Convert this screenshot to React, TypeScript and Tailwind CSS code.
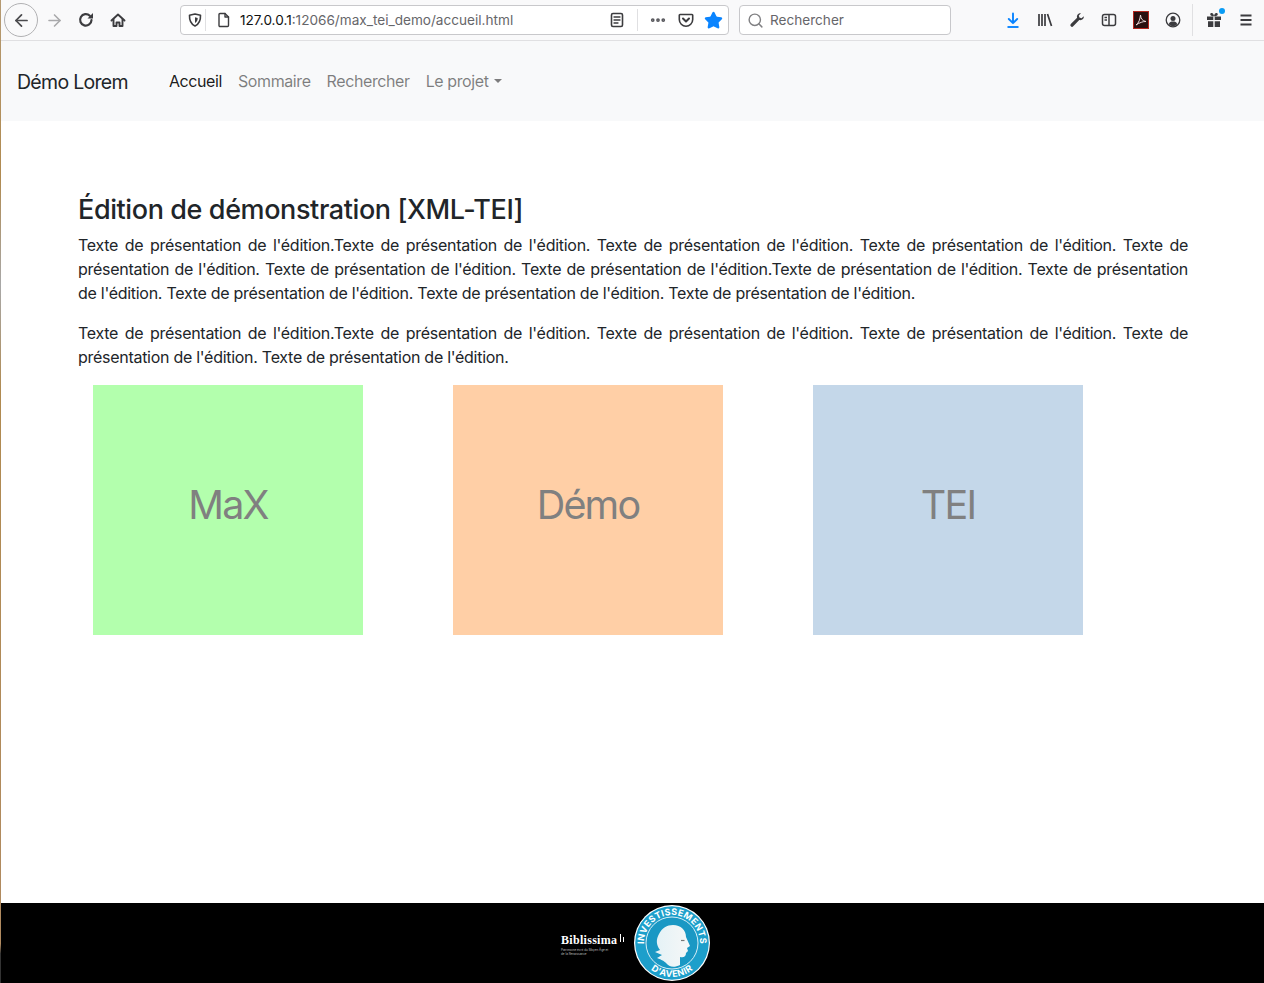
import { ArrowLeft, ArrowRight, Ellipsis, Star, Search } from 'lucide-react'

const para1 =
  "Texte de présentation de l'édition.Texte de présentation de l'édition. Texte de présentation de l'édition. Texte de présentation de l'édition. Texte de présentation de l'édition. Texte de présentation de l'édition. Texte de présentation de l'édition.Texte de présentation de l'édition. Texte de présentation de l'édition. Texte de présentation de l'édition. Texte de présentation de l'édition. Texte de présentation de l'édition."
const para2 =
  "Texte de présentation de l'édition.Texte de présentation de l'édition. Texte de présentation de l'édition. Texte de présentation de l'édition. Texte de présentation de l'édition. Texte de présentation de l'édition."

const cards = [
  { label: 'MaX', bg: 'bg-[#b3ffad]' },
  { label: 'Démo', bg: 'bg-[#ffcfa6]' },
  { label: 'TEI', bg: 'bg-[#c4d7e9]' },
]

const ToolSlot = ({ children }: { children: React.ReactNode }) => (
  <div className="flex h-8 w-8 items-center justify-center">{children}</div>
)

const Glyph = ({ children, size = 16, stroke = false }: { children: React.ReactNode; size?: number; stroke?: boolean }) => (
  <svg
    width={size}
    height={size}
    viewBox="0 0 16 16"
    fill={stroke ? 'none' : 'currentColor'}
    stroke={stroke ? 'currentColor' : 'none'}
    strokeWidth={stroke ? 1.6 : 0}
    strokeLinecap="round"
    strokeLinejoin="round"
  >
    {children}
  </svg>
)

const LogoMark = () => (
  <svg width="76" height="76" viewBox="0 0 76 76" className="shrink-0">
    <defs>
      <linearGradient id="face" x1="0" y1="0" x2="1" y2="0">
        <stop offset="0" stopColor="#e4f2f6" />
        <stop offset="1" stopColor="#f6f7f7" />
      </linearGradient>
      <path id="top-arc" d="M12.600 49.800a28 28 0 1 1 50.800 0" />
      <path id="bottom-arc" d="M8.600 55a34 34 0 0 0 58.800 0" />
    </defs>
    <circle cx="38" cy="38" r="38" fill="#fff" />
    <circle cx="38" cy="38" r="36.800" fill="#1d9fcb" />
    <circle cx="38" cy="38" r="26" fill="#1a98c4" stroke="#d8eef6" />
    <path
      d="M39 20C47 20 52 25 52 32L56 41 53 43 54 46 52 48C52 52 49 53 46 52L46 60C40 63 35 62 32 58 30 56 28 55 23 53L28 50 21 47 26 45C22 40 22 34 25 29 28 23 33 20 39 20Z"
      fill="url(#face)"
    />
    <path d="M47 35.500h3.500" stroke="#777" strokeWidth="1.200" />
    <text fontSize="9" fontWeight="700" fill="#fff" fontFamily="Inter, sans-serif" letterSpacing="0.25">
      <textPath href="#top-arc" startOffset="50%" textAnchor="middle">INVESTISSEMENTS</textPath>
    </text>
    <text fontSize="9" fontWeight="700" fill="#fff" fontFamily="Inter, sans-serif" letterSpacing="0.4">
      <textPath href="#bottom-arc" startOffset="50%" textAnchor="middle">D'AVENIR</textPath>
    </text>
  </svg>
)

const App = () => {
  return (
    <div className="relative flex h-[983px] flex-col overflow-hidden bg-white font-['Inter',sans-serif] text-[#212529]">
      {/* desktop showing at the window edge */}
      <div className="absolute top-0 left-0 h-full w-px bg-[linear-gradient(#b59a72,#b08a50_18%,#a8a8a8_29%,#b08a50_40%,#b08a60_96%,#333_97%)]" />

      {/* Browser toolbar */}
      <div className="flex h-[41px] items-center border-b border-[#e0e0e2] bg-[#f9f9fa] text-[#3c3c3f]">
        <div className="ml-[4px] flex h-[34px] w-[34px] items-center justify-center rounded-full border border-[#b1b1b3]">
          <ArrowLeft size={19} strokeWidth={2.2} className="text-[#4a4a4d]" />
        </div>
        <ToolSlot><ArrowRight size={19} strokeWidth={2} className="text-[#a9a9ab]" /></ToolSlot>
        <ToolSlot>
          <Glyph stroke>
            <path d="M13.500 8A5.700 5.700 0 1 1 11.800 3.800" strokeWidth="2.200" />
            <path d="M15 1v5.500H9.500z" fill="currentColor" stroke="none" />
          </Glyph>
        </ToolSlot>
        <ToolSlot>
          <Glyph stroke>
            <path d="M1.500 8.500 8 2.500l6.500 6" strokeWidth="1.900" />
            <path d="M3.500 7.500V14H6.500V10.500H9.500V14H12.500V7.500" strokeWidth="1.900" />
          </Glyph>
        </ToolSlot>

        <div className="ml-[46px] flex h-[30px] w-[549px] items-center rounded-[4px] border border-[#c8c8cb] bg-white text-[13.600px]">
          <div className="ml-[6px] shrink-0">
            <Glyph stroke>
              <path d="M8 2 13.500 3.300c.2 5-1.300 8.800-5.500 10.700C3.800 12.100 2.300 8.300 2.500 3.300z" />
              <path d="M8 5.200 10.700 5.900c0 2.300-.8 3.900-2.700 5z" fill="currentColor" stroke="none" />
            </Glyph>
          </div>
          <span className="ml-[2px] h-[22px] w-px bg-[#e0e0e2]" />
          <div className="ml-[10px] shrink-0">
            <Glyph stroke>
              <path d="M4 1.500h5l3.500 3.500v8.500a1 1 0 0 1-1 1h-7.500a1 1 0 0 1-1-1v-11a1 1 0 0 1 1-1z" strokeWidth="1.400" />
              <path d="M9 1.500V5h3.500" strokeWidth="1.400" />
            </Glyph>
          </div>
          <span className="mt-px ml-[8px] w-[369px] whitespace-nowrap text-[#111]">
            127.0.0.1<span className="text-[#66666a]">:12066/max_tei_demo/accueil.html</span>
          </span>
          <Glyph stroke>
            <rect x="2.500" y="1.500" width="11" height="13" rx="1.500" />
            <path d="M5 5h6M5 8h6M5 11h4" strokeWidth="1.300" />
          </Glyph>
          <span className="ml-[12px] h-[22px] w-px bg-[#e0e0e2]" />
          <Ellipsis size={18} strokeWidth={3} className="ml-[11px] text-[#55555a]" />
          <div className="ml-[11px] shrink-0">
            <Glyph stroke>
              <path d="M2 2.500h12a.7.7 0 0 1 .7.7V7.500a6.700 6.700 0 0 1-13.400 0V3.200a.7.7 0 0 1 .7-.7z" />
              <path d="M5 6.500 8 9.500l3-3" strokeWidth="2" />
            </Glyph>
          </div>
          <Star size={19} className="ml-[10px] fill-[#0a84ff] text-[#0a84ff]" />
        </div>

        <div className="ml-[10px] flex h-[30px] w-[212px] items-center rounded-[4px] border border-[#c8c8cb] bg-white text-[13.600px] text-[#66666a]">
          <Search size={17} className="ml-[7px] text-[#808083]" />
          <span className="mt-px ml-[6px]">Rechercher</span>
        </div>

        <div className="ml-[46px] flex items-center">
          <ToolSlot>
            <Glyph stroke>
              <g stroke="#0a84ff">
                <path d="M8 1.500V11M3.800 7 8 11.200 12.200 7" strokeWidth="1.900" />
                <path d="M2.500 15h11" strokeWidth="1.900" strokeLinecap="butt" />
              </g>
            </Glyph>
          </ToolSlot>
          <ToolSlot>
            <Glyph stroke>
              <path d="M2 2v12M5 2v12M8 2v12M10.500 2 14.500 14" strokeWidth="1.700" strokeLinecap="butt" />
            </Glyph>
          </ToolSlot>
          <ToolSlot>
            <Glyph>
              <path d="M14.800 4.300c.4 2.300-1.900 4.500-4.500 3.700L4.200 14.300a1.600 1.600 0 0 1-2.400-2.300L8.100 5.800C7.300 3.200 9.700.9 12 1.300L9.800 3.500l.6 2.100 2.100.6z" />
            </Glyph>
          </ToolSlot>
          <ToolSlot>
            <Glyph stroke>
              <rect x="1.500" y="2.500" width="13" height="11" rx="2" strokeWidth="1.500" />
              <path d="M8 3v10M3.500 5.500H6M3.500 8H6" strokeWidth="1.500" strokeLinecap="butt" />
            </Glyph>
          </ToolSlot>
          <ToolSlot>
            <svg width="16" height="18" viewBox="0 0 16 18">
              <rect x=".5" y=".5" width="15" height="17" fill="#2a0f0f" stroke="#b3261e" />
              <path d="M3 14c3-2 4-6 4.500-10 .5 4 2 6 5.500 6.500-3.500 0-6 1-10 3.500z" fill="none" stroke="#e8d8d8" strokeWidth="1" />
            </svg>
          </ToolSlot>
          <ToolSlot>
            <Glyph stroke>
              <circle cx="8" cy="8" r="6.800" strokeWidth="1.300" />
              <circle cx="8" cy="6.400" r="2.500" fill="currentColor" stroke="none" />
              <path d="M3.700 12.200C4.500 10 6 9.600 8 9.600s3.500.4 4.300 2.600C11 13.600 9.500 14 8 14s-3-.4-4.300-1.800z" fill="currentColor" stroke="none" />
            </Glyph>
          </ToolSlot>
        </div>

        <span className="ml-[3px] h-[32px] w-px bg-[#e0e0e2]" />

        <div className="ml-[5px] flex items-center">
          <ToolSlot>
            <div className="relative">
              <Glyph>
                <path d="M1 4.500h6.300V8H1zM8.700 4.500H15V8H8.700zM2 9.200h5.300V15H2zM8.700 9.200H14V15H8.700z" />
                <path d="M8 4.300C6 4.300 4.200 3.700 4.200 2.300 4.200 1.400 5 1 5.700 1 7 1 7.800 2.500 8 4.300zM8 4.300c.2-1.800 1-3.300 2.300-3.300.7 0 1.500.4 1.500 1.300 0 1.400-1.800 2-3.800 2z" />
              </Glyph>
              <span className="absolute -top-[4px] -right-[3px] h-[6px] w-[6px] rounded-full bg-[#0a9cf5]" />
            </div>
          </ToolSlot>
          <ToolSlot>
            <Glyph stroke>
              <path d="M2.500 3.500h11M2.500 8h11M2.500 12.500h11" strokeWidth="1.800" strokeLinecap="butt" />
            </Glyph>
          </ToolSlot>
        </div>
      </div>

      {/* Navbar */}
      <nav className="flex h-[80px] items-center bg-[#f8f9fa] pl-[17px] text-[16px] tracking-[-0.4px]">
        <span className="mt-[4px] mr-[41px] text-[19.500px] leading-none tracking-[-0.7px]">Démo Lorem</span>
        <ul className="flex gap-[16px] text-[#00000080]">
          <li className="text-[#000000e6]">Accueil</li>
          <li>Sommaire</li>
          <li>Rechercher</li>
          <li className="flex items-center gap-[5px]">
            Le projet
            <span className="border-x-[4px] border-t-[4px] border-x-transparent border-t-[#00000080]" />
          </li>
        </ul>
      </nav>

      {/* Content */}
      <main className="flex-1 pt-[71px] pr-[76px] pl-[78px]">
        <h1 className="text-[27px] leading-[36px] font-medium tracking-[-0.4px]">Édition de démonstration [XML-TEI]</h1>
        <div className="text-justify text-[16px] leading-[24px] tracking-[-0.28px]">
          <p className="mt-[5px] mb-[16px]">{para1}</p>
          <p>{para2}</p>
        </div>
        <div className="mt-[16px] flex gap-[90px] pl-[15px]">
          {cards.map((card) => (
            <div
              key={card.label}
              className={`flex h-[250px] w-[270px] items-center justify-center pb-[8px] text-[39.500px] font-[420] tracking-[-1.8px] text-[#808080] ${card.bg}`}
            >
              {card.label}
            </div>
          ))}
        </div>
      </main>

      {/* Footer */}
      <footer className="flex h-[80px] items-center justify-center bg-black pl-[7px]">
        <div className="mt-[4px] w-[73px] text-white">
          <div className="flex items-start">
            <span className="font-['Liberation_Serif',serif] text-[12px] leading-none font-bold tracking-[0.3px]">Biblissima</span>
            <span className="ml-[3px] h-[8px] w-[3px] border-l border-white" />
            <span className="mt-[3px] h-[5px] border-l border-white" />
          </div>
          <div className="mt-[2px] w-[48px] text-[3px] leading-[4px] text-[#bbb]">Patrimoine écrit du Moyen Âge et de la Renaissance</div>
        </div>
        <LogoMark />
      </footer>
    </div>
  )
}

export default App
